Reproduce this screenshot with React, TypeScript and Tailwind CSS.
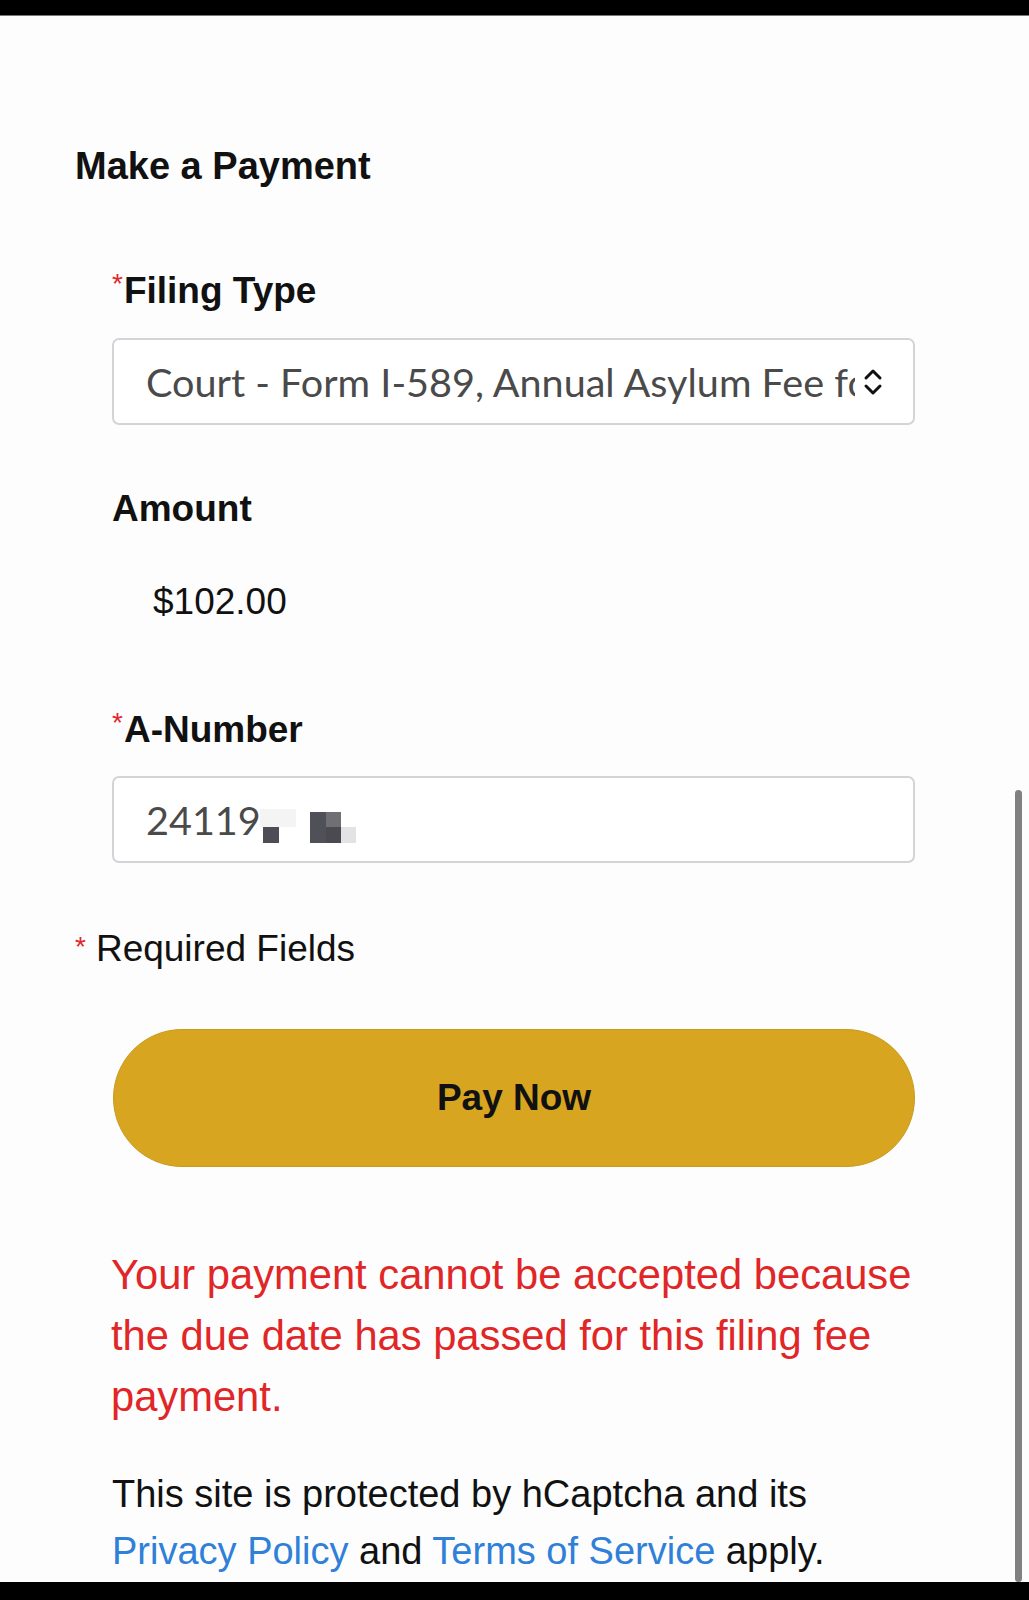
export default function App() {
  return (
    <div className="relative flex h-[1600px] w-full flex-col overflow-hidden bg-[#fdfdfd] font-['Liberation_Sans',Arial,sans-serif] text-[#111]">
      <div className="h-[16px] shrink-0 border-b border-[#777] bg-black" />

      <main className="flex min-h-0 flex-1 flex-col">
        <h1 className="ml-[75px] mt-[128px] text-[38px] font-bold leading-[44px]">
          Make a Payment
        </h1>

        <div className="ml-[112px] flex w-[803px] flex-col">
          <FieldLabel required text="Filing Type" className="mt-[81px]" />
          <div className="mt-[25px] flex h-[87px] items-center rounded-[7px] border-2 border-[#d4d4d8] bg-white pl-[32px] pr-[30px]">
            <div className="mr-[8px] min-w-0 flex-1 overflow-hidden whitespace-nowrap font-['Lato',sans-serif] text-[39.6px] text-[#4a4a4a]">
              Court - Form I-589, Annual Asylum Fee for Affirmative Asylum Applications
            </div>
            <svg width="20" height="28" viewBox="0 0 20 28" className="shrink-0">
              <path
                d="M3 10 L10 3 L17 10 M3 18 L10 25 L17 18"
                fill="none"
                stroke="#111"
                strokeWidth="3"
                strokeLinecap="round"
                strokeLinejoin="round"
              />
            </svg>
          </div>

          <FieldLabel text="Amount" className="mt-[62px]" />
          <p className="ml-[41px] mt-[49px] text-[37px] leading-[44px]">$102.00</p>

          <FieldLabel required text="A-Number" className="mt-[84px]" />
          <div className="mt-[24px] flex h-[87px] items-center rounded-[7px] border-2 border-[#d4d4d8] bg-white pl-[32px]">
            <span className="font-['Lato',sans-serif] text-[39.6px] text-[#4a4a4a]">24119</span>
            <svg width="96" height="34" viewBox="0 0 96 34" className="-ml-[1px] mt-[12px] shrink-0">
              <rect x="0" y="0" width="36" height="18" fill="#f4f4f5" />
              <rect x="3" y="18" width="16" height="16" fill="#4d4d55" />
              <rect x="50" y="3" width="16" height="31" fill="#505058" />
              <rect x="66" y="3" width="15" height="15" fill="#707074" />
              <rect x="66" y="18" width="15" height="16" fill="#4a4a50" />
              <rect x="81" y="18" width="15" height="16" fill="#e3e3e5" />
            </svg>
          </div>
        </div>

        <p className="ml-[75px] mt-[64px] flex items-start text-[37px] leading-[44px]">
          <span className="mr-[10px] mt-[5px] text-[28px] leading-[30px] text-[#e0282e]">*</span>
          Required Fields
        </p>

        <button className="ml-[113px] mt-[58px] h-[138px] w-[802px] rounded-full border border-[#c99a1c] bg-[#d8a520] text-[37px] font-bold text-[#111]">
          Pay Now
        </button>

        <p className="ml-[111px] mt-[77px] w-[850px] text-[41.7px] leading-[61px] text-[#e02626]">
          Your payment cannot be accepted because the due date has passed for this filing fee
          payment.
        </p>

        <p className="ml-[112px] mt-[39px] w-[790px] text-[38px] leading-[57px] text-[#111]">
          This site is protected by hCaptcha and its{" "}
          <a className="text-[#2f80d8]">Privacy Policy</a> and{" "}
          <a className="text-[#2f80d8]">Terms of Service</a> apply.
        </p>
      </main>

      <div className="h-[18px] shrink-0 bg-black" />

      {/* overlay scrollbar */}
      <div className="absolute right-[7px] top-[790px] h-[792px] w-[7px] rounded-full bg-[#808080]" />
    </div>
  );
}

function FieldLabel({
  text,
  required,
  className,
}: {
  text: string;
  required?: boolean;
  className?: string;
}) {
  return (
    <div className={`flex items-start text-[37px] font-bold leading-[44px] ${className ?? ""}`}>
      {required && (
        <span className="mr-[1px] text-[28px] font-normal leading-[30px] text-[#e0282e]">*</span>
      )}
      {text}
    </div>
  );
}
